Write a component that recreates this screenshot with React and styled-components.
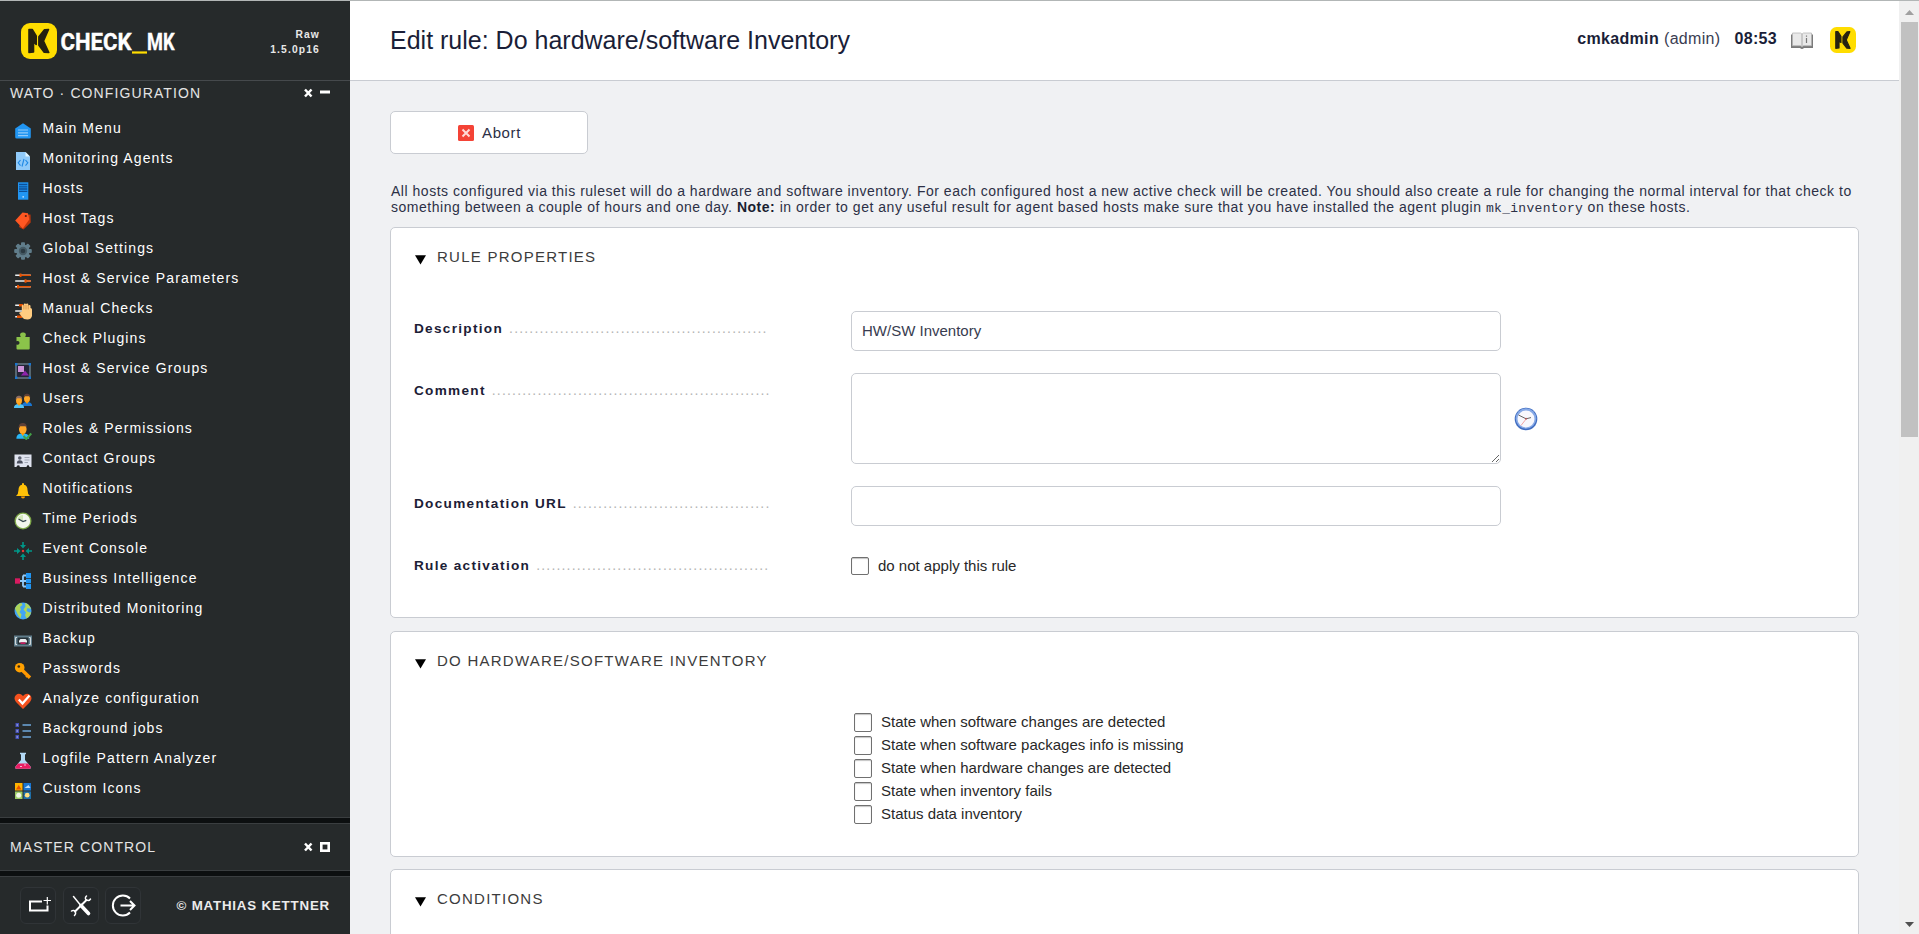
import React from "react";
import styled, { createGlobalStyle } from "styled-components";

const GlobalStyle = createGlobalStyle`
  * { box-sizing: border-box; }
  html, body { margin: 0; padding: 0; overflow: hidden; }
  body { font-family: "Liberation Sans", Arial, sans-serif; }
`;

const Frame = styled.div`
  height: 934px;
  width: 1919px;
  display: flex;
  overflow: hidden;
  border-top: 1px solid #b2b6b6;
`;

/* ---------- sidebar ---------- */
const Sidebar = styled.aside`
  width: 350px;
  flex: none;
  display: flex;
  flex-direction: column;
  background: #262a2b;
  color: #fff;
`;

const SideHead = styled.header`
  height: 80px;
  flex: none;
  display: flex;
  justify-content: space-between;
  padding: 22px 30px 0 21px;
  border-bottom: 1px solid #45494c;
`;

const Version = styled.div`
  padding-top: 4px;
  text-align: right;
  font-size: 10.3px;
  font-weight: bold;
  letter-spacing: 1.15px;
  line-height: 15px;
  color: #e8e8e8;
`;

const SnapinTitle = styled.div`
  height: ${(p) => p.$height}px;
  flex: none;
  display: flex;
  align-items: center;
  justify-content: space-between;
  padding: 0 20px 0 10px;
  font-size: 14px;
  letter-spacing: 1.11px;
  color: #e4e4e4;

  svg { margin-bottom: 1px; }
`;

const SnapinList = styled.ul`
  list-style: none;
  margin: 0;
  padding: 8px 0 14px;
`;

const SnapinItem = styled.li`
  height: 30px;
  display: flex;
  align-items: center;
  gap: 10.5px;
  padding-left: 14px;
  font-size: 14px;
  letter-spacing: 1.12px;

  svg { flex: none; margin-top: 6px; }
`;

const Divider = styled.div`
  height: 7px;
  flex: none;
  background: #0c0f10;
  border-top: 1px solid #3a3e40;
  border-bottom: 1px solid #3a3e40;
`;

const SideFoot = styled.footer`
  flex: 1;
  display: flex;
  align-items: flex-start;
  padding: 10px 20px 0 20px;
`;

const FootButton = styled.button`
  width: 36px;
  height: 37px;
  margin: 0 6.5px 0 0;
  padding: 0;
  display: flex;
  align-items: center;
  justify-content: center;
  background: #24282a;
  border: 1px solid #303437;
  border-radius: 6px;
`;

const Copyright = styled.span`
  margin-left: auto;
  line-height: 37px;
  font-size: 13.3px;
  font-weight: bold;
  letter-spacing: 0.82px;
  color: #ececec;
`;

/* ---------- main area ---------- */
const Main = styled.main`
  flex: 1;
  display: flex;
  flex-direction: column;
  background: #f0f1f3;
  overflow: hidden;
`;

const TopBar = styled.header`
  height: 80px;
  flex: none;
  display: flex;
  align-items: center;
  padding: 0 43px 0 40px;
  background: #fff;
  border-bottom: 1px solid #c9ccd2;
  color: #1a1e38;
`;

const Title = styled.h1`
  margin: 0 auto 0 0;
  font-size: 25px;
  font-weight: normal;
`;

const UserInfo = styled.div`
  display: flex;
  align-items: center;
  font-size: 16px;
  letter-spacing: 0.32px;
  padding-bottom: 4px;

  span { margin-left: 5px; color: #3a3d52; }
  time { margin: 0 14px 0 14px; font-weight: bold; }
`;

const Content = styled.div`
  padding: 30px 40px 0;
  display: flex;
  flex-direction: column;
`;

const AbortButton = styled.button`
  width: 198px;
  height: 43px;
  padding: 0 0 0 1px;
  display: flex;
  align-items: center;
  justify-content: center;
  gap: 8px;
  background: #fff;
  border: 1px solid #c9ccd2;
  border-radius: 5px;
  font: 15px "Liberation Sans", Arial, sans-serif;
  letter-spacing: 0.6px;
  color: #2c3046;
`;

const HelpText = styled.p`
  margin: 29px 0 12px 1px;
  height: 32px;
  font-size: 14px;
  letter-spacing: 0.52px;
  line-height: 16px;
  color: #2c3046;
  white-space: nowrap;

  b { color: #1a1e30; }
  tt { font-family: "Liberation Mono", monospace; font-size: 13px; line-height: 1; letter-spacing: 0.3px; }
`;

const Panel = styled.section`
  height: ${(p) => p.$height}px;
  margin-bottom: ${(p) => p.$gap}px;
  flex: none;
  background: #fff;
  border: 1px solid #c9ccd2;
  border-radius: 5px;
  padding: 0 23px;
`;

const PanelTitle = styled.h2`
  margin: 0 0 ${(p) => p.$after}px;
  padding-top: ${(p) => p.$top || 18}px;
  height: 39px;
  display: flex;
  align-items: flex-start;
  gap: 11px;
  font-size: 15px;
  font-weight: normal;
  letter-spacing: 1.25px;
  line-height: 21px;
  color: #3c3c3c;

  svg { margin-top: 9px; }
`;

const FormRow = styled.div`
  display: grid;
  grid-template-columns: 437px auto 1fr;
  margin-bottom: 22px;
`;

const Label = styled.div`
  display: flex;
  align-items: baseline;
  gap: 6px;
  padding-top: 9px;
  font-size: 13.6px;
  font-weight: bold;
  letter-spacing: 1.3px;
  line-height: 16px;
  color: #1c2036;
`;

const Dots = styled.span`
  font-size: 14px;
  font-weight: normal;
  letter-spacing: 1.18px;
  color: #b4b4b4;
`;

const TextInput = styled.input`
  width: 650px;
  height: 40px;
  padding: 0 10px 2px;
  background: #fff;
  border: 1px solid #c9ccd2;
  border-radius: 5px;
  outline: none;
  font: 15px "Liberation Sans", Arial, sans-serif;
  color: #383c50;
`;

const TextArea = styled.textarea`
  display: block;
  width: 650px;
  height: 91px;
  padding: 10px;
  background: #fff;
  border: 1px solid #c9ccd2;
  border-radius: 5px;
  outline: none;
`;

const ClockButton = styled.span`
  display: flex;
  padding: 34px 0 0 13px;
`;

const CheckLabel = styled.label`
  display: flex;
  align-items: center;
  gap: 9px;
  height: ${(p) => p.$height}px;
  font-size: 15px;
  color: #282828;
`;

const CheckInput = styled.input`
  appearance: none;
  width: 18px;
  height: ${(p) => p.$height || 18}px;
  margin: 2px 0 0;
  background: #fff;
  border: 1px solid #707070;
  border-radius: 2px;
  box-shadow: inset 0 1px 1px #c4c4c4;
`;

const CheckGroup = styled.div`
  margin-left: 440px;
`;

/* ---------- scrollbar ---------- */
const Scrollbar = styled.div`
  width: 20px;
  flex: none;
  display: flex;
  flex-direction: column;
  align-items: center;
  justify-content: space-between;
  background: #f0f0f0;
`;

const ScrollThumb = styled.div`
  width: 17px;
  height: 415px;
  margin-bottom: auto;
  margin-left: 1px;
  background: #c1c1c1;
`;

const ScrollArrow = styled.svg`
  display: block;
  flex: none;
  width: 20px;
  height: 21px;
`;

/* ---------- drawings ---------- */
const KMark = ({ size }) => (
  <svg width={size} height={size} viewBox="0 0 36 36">
    <rect width="36" height="36" rx="9" fill="#ffdd00" />
    <g fill="#262210" stroke="#262210" strokeWidth="1.6" strokeLinejoin="round">
      <path d="M8 6.500h3.200l4 6.500v8.500l-2.700-2.500v10L8 29.500z" />
      <path d="M27.500 6.500l-4 .3-5.600 7v8.400l5.300 7 4.600.3L22.500 18z" />
    </g>
  </svg>
);

const Wordmark = () => (
  <svg width="170" height="38" viewBox="0 0 170 38" fontFamily="Roboto, sans-serif" fontWeight="700" fontSize="24.5">
    <svg width="36" height="36"><KMark size={36} /></svg>
    <g fill="#fff" stroke="#fff" strokeWidth=".4">
      <text x="39.500" y="27" textLength="71" lengthAdjust="spacingAndGlyphs">CHECK</text>
      <text x="126" y="27" textLength="27.500" lengthAdjust="spacingAndGlyphs">MK</text>
    </g>
    <rect x="111" y="28.400" width="15" height="2.200" fill="#ffdd00" />
  </svg>
);

const Controls = ({ open }) => (
  <svg width="26" height="10" viewBox="0 0 26 10">
    <path d="M1 1.500l6.500 7M7.500 1.500L1 8.500" stroke="#fff" strokeWidth="2.500" />
    {open ? <rect x="16" y="2.5" width="10" height="3" fill="#fff" /> : <rect x="17.300" y="1.300" width="7.400" height="7.400" fill="none" stroke="#fff" strokeWidth="2.600" />}
  </svg>
);

const Person = ({ x = 0, y = 0, shirt, hair = "#5d4037" }) => (
  <g transform={`translate(${x} ${y})`}>
    <path d="M0 13c0-3 2-4 5-4s5 1 5 4z" fill={shirt} />
    <ellipse cx="5" cy="5.5" rx="3" ry="4" fill="#ffa726" />
    <path d="M1.8 5C1.5 1.5 3.5.7 5 .7S8.500 1.500 8.200 5L7.200 3.300H3z" fill={hair} />
    <path d="M3.500 8.500h3l-1.500 2.500z" fill="#ff9800" />
  </g>
);

const icons = {
  home: (
    <>
      <path d="M1.200 6.500L9 1.300l7.800 5.200V15a1.500 1.500 0 0 1-1.500 1.500H2.700A1.500 1.500 0 0 1 1.200 15z" fill="#2196f3" />
      <path d="M4 8h10M4 10.800h10M4 13.600h10" stroke="#90caf9" strokeWidth="1.200" />
    </>
  ),
  agents: (
    <>
      <path d="M2 0h9.500L16 4.500V18H2z" fill="#90caf9" />
      <path d="M11.500 0v4.500H16z" fill="#e1f5fe" />
      <path d="M6.500 8l-2.300 2.800 2.300 2.800M11.500 8l2.300 2.800-2.300 2.800M10 7l-2 7.500" fill="none" stroke="#1e88e5" strokeWidth="1.100" />
    </>
  ),
  hosts: (
    <>
      <rect x="4" y=".3" width="10.300" height="17.400" fill="#2196f3" />
      <path d="M5 2.500h8.300M5 4.800h8.300M5 7h8.300M5 9.300h8.300" stroke="#0d4f96" strokeWidth="1.300" />
      <circle cx="9.200" cy="14.800" r=".9" fill="#bbdefb" />
    </>
  ),
  tag: (
    <>
      <path d="M9 3l7.500-.5.2 8L9.500 17.500 5 15z" fill="#bf360c" />
      <path d="M8.500.5l5.500.7 1.300 6.300-6.500 9L1.200 8.500z" fill="#ff5722" />
      <circle cx="11.800" cy="4" r="1.100" fill="#5d1f10" />
    </>
  ),
  gear: (
    <>
      <g fill="#607d8b">
        {[0, 45, 90, 135].map((a) => (
          <rect key={a} x="7" y=".2" width="4" height="17.600" rx="1" transform={`rotate(${a} 9 9)`} />
        ))}
        <circle cx="9" cy="9" r="6.600" />
      </g>
      <circle cx="9" cy="9" r="4.200" fill="#455a64" />
      <circle cx="9" cy="9" r="2.300" fill="#2b3a42" />
    </>
  ),
  sliders: (
    <>
      <path d="M1.200 3.200h15.600M1.200 9h15.600M1.200 14.800h15.600" stroke="#eceff1" strokeWidth="1.400" />
      <path d="M6 3.200h10.800M11 9h5.800M4 14.800h12.800" stroke="#e65100" strokeWidth="1.600" />
      <path d="M6.500 1.500v3.400M11.500 7.300v3.400M4 13.100v3.400" stroke="#e65100" strokeWidth="2" />
    </>
  ),
  manual: (
    <>
      <path d="M1.200 3.200h8M1.200 9h7M1.200 14.800h7" stroke="#eceff1" strokeWidth="1.400" />
      <path d="M5 3.200h4M3 14.800h5" stroke="#e65100" strokeWidth="2.400" />
      <path d="M7.800 10V4q0-1 1-1t1 1V2.600q0-1 1.100-1t1.100 1q0-1 1.200-1t1.100 1V4q.2-1 1.200-1t1 1v2q1.500 0 1.500 1.500V14q-1 3.500-4.500 3.500-4 0-5.500-2.500L5 11q1.500-1.500 2.800-1z" fill="#ffcc80" />
      <path d="M9.900 3v4.500M12 3v4.500M14.200 3v4.500" stroke="#c9853c" strokeWidth=".7" />
    </>
  ),
  puzzle: (
    <path d="M2.500 5h4.300C5 2 7 .6 9 .6s4 1.400 2.200 4.400h4.500v11.500q0 1-1 1H3.500q-1 0-1-1v-4c4 1.500 4-4.800 0-3.300z" fill="#8bc34a" />
  ),
  groups: (
    <>
      <rect x="2" y="2" width="14" height="14" fill="#242638" stroke="#78909c" strokeWidth="1.200" />
      <rect x="4" y="4" width="6" height="6" fill="#ce93d8" />
      <path d="M7 13.500l4-5 4 5z" fill="#8e24aa" />
      <path d="M1 1h2.400v2.400H1zM14.600 1H17v2.400h-2.400zM1 14.600h2.400V17H1zM14.600 14.600H17V17h-2.400z" fill="#1976d2" />
    </>
  ),
  users: (
    <>
      <Person x={8} y={1} shirt="#1976d2" />
      <Person x={0} y={3} shirt="#4fc3f7" hair="#8d6e63" />
    </>
  ),
  roles: (
    <>
      <g transform="translate(2 0) scale(1.280)"><Person x={0.3} y={0} shirt="#29b6f6" /></g>
      <path d="M9.500 14l2.800 3 5-5.500" fill="none" stroke="#43a047" strokeWidth="2" />
    </>
  ),
  contacts: (
    <>
      <path d="M.5 2.500h17V15h-2a1.500 1.500 0 0 0-3 0h-7a1.500 1.500 0 0 0-3 0h-2z" fill="#dfe3ef" />
      <circle cx="5.800" cy="6" r="1.800" fill="#5c6170" />
      <path d="M2.800 11.500q0-3.300 3-3.300t3 3.300z" fill="#4a4f5e" />
      <path d="M10.500 5.500h5M10.500 8h5M10.500 10.500h3.500" stroke="#a5abb8" strokeWidth="1" />
      <path d="M3.500 16.500v-3h2v3zM13 16.500v-3h2v3z" fill="#202325" />
    </>
  ),
  bell: (
    <>
      <path d="M2 14q2.500-2 2.500-6Q4.500 3.500 8 2.800V2a1 1 0 0 1 2 0v.8q3.500.7 3.500 5.200 0 4 2.500 6z" fill="#ffc107" />
      <path d="M7 14.500h4q0 2-2 2t-2-2z" fill="#ffa000" />
    </>
  ),
  clock: (
    <>
      <circle cx="9" cy="9" r="8.500" fill="#7da648" />
      <circle cx="9" cy="9" r="7.200" fill="#f3f7ee" />
      <path d="M9 9V3A6 6 0 0 0 3.500 6.500z" fill="#c5e1a5" opacity=".7" />
      <path d="M4.500 7L9 9.600l3.300-1.200" fill="none" stroke="#37474f" strokeWidth="1.300" />
    </>
  ),
  event: (
    <>
      <g fill="#009688">
        {[0, 90, 180, 270].map((a) => (
          <path key={a} d="M8.200 0h1.600v3h2.200L9 6.500 6 3h2.200z" transform={`rotate(${a} 9 9)`} />
        ))}
      </g>
      <rect x="7.900" y="7.900" width="2.200" height="2.200" fill="#e53935" />
    </>
  ),
  bi: (
    <>
      <path d="M4 9h9M9 3.500v11M9 3.500h4M9 14.500h4" fill="none" stroke="#90caf9" strokeWidth="1.800" />
      <rect x="1" y="6.300" width="5" height="5.400" fill="#d81b60" />
      <path d="M12 1h5v5h-5zM12 6.700h5v4.600h-5zM12 12h5v5h-5z" fill="#2196f3" />
    </>
  ),
  globe: (
    <>
      <circle cx="9" cy="9" r="8.500" fill="#42a5f5" />
      <path d="M1 6.500Q3 1.500 7.500 1L8.500 3 6 5l1 2.500L5.500 10l2 2.500-1 4L4 13z" fill="#aed558" />
      <path d="M11 1q4.500 1 6 6l-3.500-1-1 3 3 1.500 1.500-.500q-.5 4-4.500 6.500L11 13l1-2.500-2.500-3 2-3z" fill="#aed558" />
    </>
  ),
  backup: (
    <>
      <rect x="0" y="3.500" width="18" height="11" fill="#607d8b" />
      <rect x="3.500" y="5.500" width="11" height="7" rx="1" fill="#263238" />
      <path d="M3 5.500H1.500v7H3M15 5.500h1.500v7H15" fill="none" stroke="#cfd8dc" strokeWidth="1" />
      <path d="M5 10.500V8.500L6.500 7h5L13 8.500v2z" fill="#eceff1" />
      <rect x="6.500" y="10.300" width="5" height="1.700" fill="#c2185b" />
    </>
  ),
  key: (
    <>
      <path d="M7 7l9 8.700" stroke="#ff9800" strokeWidth="3.400" />
      <path d="M12 15l2-2" stroke="#ff9800" strokeWidth="2" />
      <circle cx="5.700" cy="5.700" r="4.800" fill="#ffa000" />
      <circle cx="4.800" cy="4.500" r="1.300" fill="#3b2a10" />
    </>
  ),
  heart: (
    <>
      <path d="M9 17L2 10Q-1 6 2 3q3.500-2.800 7 1 3.500-3.800 7-1 3 3 0 7z" fill="#f4511e" />
      <path d="M4.800 7.500L8.500 11.500l7-8" fill="none" stroke="#fff" strokeWidth="2.200" />
    </>
  ),
  jobs: (
    <>
      <path d="M1.500 1h3.500v4H1.500zM1.500 7h3.500v4H1.500zM1.500 13h3.500v4H1.500z" fill="#4450b8" />
      <path d="M2.500 3h1.500M2.500 9h1.500M2.500 15h1.500" stroke="#c5cae9" strokeWidth="1.200" />
      <path d="M8.500 3H17M8.500 9H17M8.500 15H17" stroke="#6fa8dc" strokeWidth="1.700" />
    </>
  ),
  flask: (
    <>
      <path d="M6 .8h6v1.500h-1V8l5.500 6.500q1 2.300-1.500 2.300H3q-2.500 0-1.500-2.300L7 8V2.300H6z" fill="#b3d9f5" />
      <path d="M4 11.500h10l2.800 3.500q.5 1.800-1.500 1.800H2.700q-2 0-1.500-1.800z" fill="#e91e63" />
      <path d="M6 14.500h2M10 13h2" stroke="#f8bbd0" />
    </>
  ),
  custom: (
    <>
      <rect x="1" y="1" width="7.500" height="7.500" fill="#ffb300" />
      <path d="M2 7.500l2.700-4.500 2.800 4.500z" fill="#e65100" />
      <rect x="9.500" y="1" width="7.500" height="7.500" fill="#1976d2" />
      <path d="M10.500 6l4-3 2 3z" fill="#bbdefb" />
      <rect x="1" y="9.500" width="7.500" height="7.500" fill="#9ccc65" />
      <circle cx="4.700" cy="13.200" r="2.500" fill="#f1f8e9" />
      <rect x="9.500" y="9.500" width="7.500" height="7.500" fill="#1e6fa8" />
      <circle cx="13.200" cy="13.200" r="2.400" fill="#ffe082" />
    </>
  ),
};

const menu = [
  ["home", "Main Menu"],
  ["agents", "Monitoring Agents"],
  ["hosts", "Hosts"],
  ["tag", "Host Tags"],
  ["gear", "Global Settings"],
  ["sliders", "Host & Service Parameters"],
  ["manual", "Manual Checks"],
  ["puzzle", "Check Plugins"],
  ["groups", "Host & Service Groups"],
  ["users", "Users"],
  ["roles", "Roles & Permissions"],
  ["contacts", "Contact Groups"],
  ["bell", "Notifications"],
  ["clock", "Time Periods"],
  ["event", "Event Console"],
  ["bi", "Business Intelligence"],
  ["globe", "Distributed Monitoring"],
  ["backup", "Backup"],
  ["key", "Passwords"],
  ["heart", "Analyze configuration"],
  ["jobs", "Background jobs"],
  ["flask", "Logfile Pattern Analyzer"],
  ["custom", "Custom Icons"],
];

const Triangle = () => (
  <svg width="12" height="10" viewBox="0 0 12 10">
    <path d="M1 .300h11L6.500 9.500z" fill="#000" />
  </svg>
);

const FieldLabel = ({ text, dots }) => (
  <Label>
    {text}
    <Dots>{".".repeat(dots)}</Dots>
  </Label>
);

const inventoryOptions = [
  "State when software changes are detected",
  "State when software packages info is missing",
  "State when hardware changes are detected",
  "State when inventory fails",
  "Status data inventory",
];

export default function App() {
  return (
    <Frame>
      <GlobalStyle />
      <Sidebar>
        <SideHead>
          <Wordmark />
          <Version>
            Raw
            <br />
            1.5.0p16
          </Version>
        </SideHead>
        <SnapinTitle $height={24}>
          WATO · CONFIGURATION
          <Controls open />
        </SnapinTitle>
        <SnapinList>
          {menu.map(([icon, label]) => (
            <SnapinItem key={label}>
              <svg width="18" height="18" viewBox="0 0 18 18">{icons[icon]}</svg>
              {label}
            </SnapinItem>
          ))}
        </SnapinList>
        <Divider />
        <SnapinTitle $height={46}>
          MASTER CONTROL
          <Controls />
        </SnapinTitle>
        <Divider />
        <SideFoot>
          <FootButton>
            <svg width="26" height="26" viewBox="0 0 26 26" fill="none" stroke="#fff">
              <path d="M17 8.500H5v9h17.500v-5" strokeWidth="2" />
              <path d="M18.500 7.500h7.500M22.300 4v7.500" strokeWidth="1.200" />
            </svg>
          </FootButton>
          <FootButton>
            <svg width="24" height="24" viewBox="0 0 24 24" fill="none" stroke="#fff" strokeLinecap="round">
              <path d="M4.500 2.500L11 10.500" strokeWidth="1.500" />
              <path d="M12 11.500l7.500 8" strokeWidth="3.600" />
              <path d="M6 17.500L17.500 6" strokeWidth="2" />
              <path d="M17.500 2c-1.500 1.500-1.500 3 0 4s3 .500 4-1M2.500 17c1.500-1 3.500-.500 4 1s0 2.500-1 3.500" strokeWidth="1.500" />
            </svg>
          </FootButton>
          <FootButton>
            <svg width="26" height="24" viewBox="0 0 26 24" fill="none" stroke="#fff" strokeWidth="2">
              <path d="M20 4.500A10 10 0 1 0 20 18.500" />
              <path d="M10.500 11.500h13M20 7l4.500 4.500L20 16" />
            </svg>
          </FootButton>
          <Copyright>© MATHIAS KETTNER</Copyright>
        </SideFoot>
      </Sidebar>

      <Main>
        <TopBar>
          <Title>Edit rule: Do hardware/software Inventory</Title>
          <UserInfo>
            <b>cmkadmin</b>
            <span>(admin)</span>
            <time>08:53</time>
          </UserInfo>
          <svg width="22" height="18" viewBox="0 0 22 18">
            <path d="M0 2.500h22V16h-9q-2 2-4 0H0z" fill="#7a7a7a" />
            <path d="M1.500 1h8l1.500 1 1.500-1h8v12.800h-8L11 15l-1.500-1.200h-8z" fill="#e9e9e9" stroke="#b0b0b0" strokeWidth=".7" />
            <path d="M11 2v13" stroke="#a8a8a8" />
            <path d="M15.500 3.500v1.300M15.500 6v5" stroke="#777" strokeWidth="1.200" />
          </svg>
          <svg width="43" height="27"><svg x="17" width="26" height="27"><KMark size={26} /></svg></svg>
        </TopBar>
        <Content>
          <AbortButton>
            <svg width="16" height="16" viewBox="0 0 16 16">
              <rect width="16" height="16" rx="1.500" fill="#f44336" />
              <path d="M4.500 4.500l7 7M11.500 4.500l-7 7" stroke="#ffdad6" strokeWidth="2" />
            </svg>
            Abort
          </AbortButton>
          <HelpText>
            All hosts configured via this ruleset will do a hardware and software inventory. For each configured host a new active check will be created. You should also create a rule for changing the normal interval for that check to
            <br />
            something between a couple of hours and one day. <b>Note:</b> in order to get any useful result for agent based hosts make sure that you have installed the agent plugin <tt>mk_inventory</tt> on these hosts.
          </HelpText>

          <Panel $height={391} $gap={13}>
            <PanelTitle $after={44}>
              <Triangle />
              RULE PROPERTIES
            </PanelTitle>
            <FormRow>
              <FieldLabel text="Description" dots={51} />
              <TextInput defaultValue="HW/SW Inventory" />
            </FormRow>
            <FormRow>
              <FieldLabel text="Comment" dots={55} />
              <TextArea />
              <ClockButton>
                <svg width="24" height="24" viewBox="0 0 24 24">
                  <circle cx="12" cy="12" r="11.300" fill="#3f6cc0" />
                  <circle cx="12" cy="11.500" r="10.300" fill="#86a9e6" />
                  <circle cx="12" cy="12" r="8.500" fill="#f8f8fd" />
                  <path d="M4.500 8l7.500 3.800 5-1.200" fill="none" stroke="#666" strokeWidth="1" />
                  <path d="M12.500 11.500L7 18.500" stroke="#ef9a9a" strokeWidth=".9" />
                  <circle cx="12" cy="11.700" r=".9" fill="#b05050" />
                </svg>
              </ClockButton>
            </FormRow>
            <FormRow>
              <FieldLabel text="Documentation URL" dots={39} />
              <TextInput />
            </FormRow>
            <FormRow>
              <FieldLabel text="Rule activation" dots={46} />
              <CheckLabel $height={34}>
                <CheckInput type="checkbox" />
                do not apply this rule
              </CheckLabel>
            </FormRow>
          </Panel>

          <Panel $height={226} $gap={12}>
            <PanelTitle $after={39} $top={17.5}>
              <Triangle />
              DO HARDWARE/SOFTWARE INVENTORY
            </PanelTitle>
            <CheckGroup>
              {inventoryOptions.map((text) => (
                <CheckLabel key={text} $height={23}>
                  <CheckInput type="checkbox" $height={19} />
                  {text}
                </CheckLabel>
              ))}
            </CheckGroup>
          </Panel>

          <Panel $height={160} $gap={0}>
            <PanelTitle $after={0}>
              <Triangle />
              CONDITIONS
            </PanelTitle>
          </Panel>
        </Content>
      </Main>

      <Scrollbar>
        <ScrollArrow viewBox="0 0 20 21">
          <path d="M6 14l4.500-5 4.500 5z" fill="#a0a0a0" />
        </ScrollArrow>
        <ScrollThumb />
        <ScrollArrow viewBox="0 0 20 21">
          <path d="M6 9l4.500 5L15 9z" fill="#505050" />
        </ScrollArrow>
      </Scrollbar>
    </Frame>
  );
}
